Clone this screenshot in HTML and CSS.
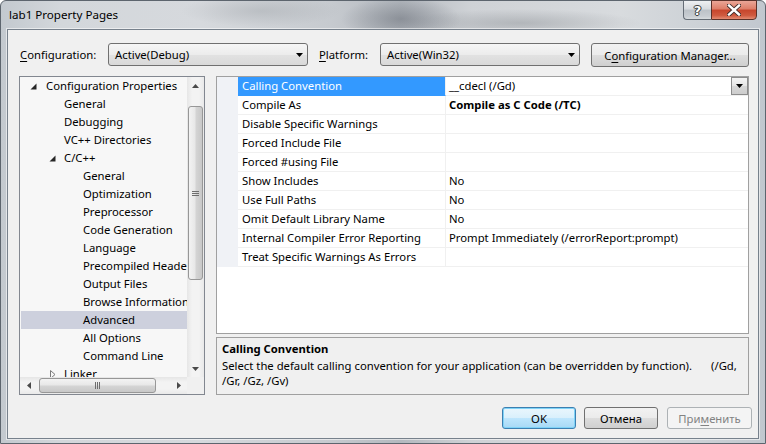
FILE: index.html
```html
<!DOCTYPE html>
<html>
<head>
<meta charset="utf-8">
<link rel="stylesheet" href="styles.css">
</head>
<body>
<div class="window">
  <div class="titlebar">
    <span class="title">lab1 Property Pages</span>
    <div class="caption">
      <div class="cbtn help"><span>?</span></div>
      <div class="cbtn close">
        <svg width="14" height="12" viewBox="0 0 14 12"><path d="M2 1.5L12 10.5M12 1.5L2 10.5" stroke="#3b2a28" stroke-width="4.2" stroke-linecap="square"/><path d="M2 1.5L12 10.5M12 1.5L2 10.5" stroke="#ffffff" stroke-width="2.4" stroke-linecap="square"/></svg>
      </div>
    </div>
  </div>
  <div class="client">
    <div class="toprow">
      <label class="lbl cfg-lbl"><u>C</u>onfiguration:</label>
      <div class="combo"><span>Active(Debug)</span><svg class="arr" width="7" height="4" viewBox="0 0 7 4"><path d="M0 0H7L3.5 4Z" fill="#000"/></svg></div>
      <label class="lbl plat-lbl"><u>P</u>latform:</label>
      <div class="combo"><span>Active(Win32)</span><svg class="arr" width="7" height="4" viewBox="0 0 7 4"><path d="M0 0H7L3.5 4Z" fill="#000"/></svg></div>
      <div class="btn cfgmgr">C<u>o</u>nfiguration Manager...</div>
    </div>
    <div class="main">
      <div class="tree">
        <div class="tree-top">
          <div class="list">
            <div class="item l1"><svg class="exp" width="7" height="7" viewBox="0 0 7 7"><path d="M6.5 0.5V6.5H0.5Z" fill="#262626"/></svg>Configuration Properties</div>
            <div class="item l2">General</div>
            <div class="item l2">Debugging</div>
            <div class="item l2">VC++ Directories</div>
            <div class="item l2"><svg class="exp" width="7" height="7" viewBox="0 0 7 7"><path d="M6.5 0.5V6.5H0.5Z" fill="#262626"/></svg>C/C++</div>
            <div class="item l3">General</div>
            <div class="item l3">Optimization</div>
            <div class="item l3">Preprocessor</div>
            <div class="item l3">Code Generation</div>
            <div class="item l3">Language</div>
            <div class="item l3">Precompiled Headers</div>
            <div class="item l3">Output Files</div>
            <div class="item l3">Browse Information</div>
            <div class="item l3 sel">Advanced</div>
            <div class="item l3">All Options</div>
            <div class="item l3">Command Line</div>
            <div class="item l2"><svg class="col" width="6" height="9" viewBox="0 0 6 9"><path d="M0.5 0.5L5 4.5L0.5 8.5Z" fill="none" stroke="#7a7a7a"/></svg>Linker</div>
          </div>
          <div class="vscroll">
            <div class="sarrow"><svg width="7" height="4" viewBox="0 0 7 4"><path d="M0 4L3.5 0L7 4Z" fill="#4a4a4a"/></svg></div>
            <div class="vtrack">
              <div class="vthumb"><svg width="7" height="7" viewBox="0 0 7 7"><path d="M0 1.5H7M0 3.5H7M0 5.5H7" stroke="#6e6e6e" stroke-width="1"/></svg></div>
            </div>
            <div class="sarrow"><svg width="7" height="4" viewBox="0 0 7 4"><path d="M0 0H7L3.5 4Z" fill="#4a4a4a"/></svg></div>
          </div>
        </div>
        <div class="tree-bottom">
          <div class="hscroll">
            <div class="harrow"><svg width="4" height="7" viewBox="0 0 4 7"><path d="M4 0V7L0 3.5Z" fill="#4a4a4a"/></svg></div>
            <div class="htrack">
              <div class="hthumb"><svg width="7" height="7" viewBox="0 0 7 7"><path d="M1.5 0V7M3.5 0V7M5.5 0V7" stroke="#6e6e6e" stroke-width="1"/></svg></div>
            </div>
            <div class="harrow"><svg width="4" height="7" viewBox="0 0 4 7"><path d="M0 0V7L4 3.5Z" fill="#4a4a4a"/></svg></div>
          </div>
          <div class="corner"></div>
        </div>
      </div>
      <div class="right">
        <div class="grid">
          <div class="row"><div class="gut"></div><div class="name hl">Calling Convention</div><div class="val">__cdecl (/Gd)<div class="ddbtn"><svg width="7" height="4" viewBox="0 0 7 4"><path d="M0 0H7L3.5 4Z" fill="#000"/></svg></div></div></div>
          <div class="row"><div class="gut"></div><div class="name">Compile As</div><div class="val bold">Compile as C Code (/TC)</div></div>
          <div class="row"><div class="gut"></div><div class="name">Disable Specific Warnings</div><div class="val"></div></div>
          <div class="row"><div class="gut"></div><div class="name">Forced Include File</div><div class="val"></div></div>
          <div class="row"><div class="gut"></div><div class="name">Forced #using File</div><div class="val"></div></div>
          <div class="row"><div class="gut"></div><div class="name">Show Includes</div><div class="val">No</div></div>
          <div class="row"><div class="gut"></div><div class="name">Use Full Paths</div><div class="val">No</div></div>
          <div class="row"><div class="gut"></div><div class="name">Omit Default Library Name</div><div class="val">No</div></div>
          <div class="row"><div class="gut"></div><div class="name">Internal Compiler Error Reporting</div><div class="val">Prompt Immediately (/errorReport:prompt)</div></div>
          <div class="row"><div class="gut"></div><div class="name">Treat Specific Warnings As Errors</div><div class="val"></div></div>
        </div>
        <div class="desc">
          <div class="desc-title">Calling Convention</div>
          <div class="desc-text">Select the default calling convention for your application (can be overridden by function).<span class="sp"></span>(/Gd,<br>/Gr, /Gz, /Gv)</div>
        </div>
      </div>
    </div>
    <div class="buttons">
      <div class="btn ok">OK</div>
      <div class="btn cancel">Отмена</div>
      <div class="btn apply">При<u>м</u>енить</div>
    </div>
  </div>
</div>
</body>
</html>
```
FILE: styles.css
```css
* { box-sizing: border-box; }
html, body { margin: 0; padding: 0; }
body {
  width: 766px;
  height: 444px;
  overflow: hidden;
  font-family: "Noto Sans", "Open Sans", sans-serif;
  font-size: 11.3px;
  color: #000;
}
.window {
  width: 766px;
  height: 444px;
  background:
    radial-gradient(ellipse 60px 22px at 400px 18px, rgba(90,95,105,0.45), rgba(90,95,105,0)),
    radial-gradient(ellipse 120px 14px at 520px 22px, rgba(120,125,130,0.35), rgba(120,125,130,0)),
    radial-gradient(ellipse 80px 16px at 260px 10px, rgba(150,155,160,0.35), rgba(150,155,160,0)),
    linear-gradient(90deg, #c3c9cf 0px, #d3d7db 60px, #d6d9dd 200px, #c6cacf 330px, #b4b9bf 400px, #cfd2d6 470px, #d8dbde 620px, #ccd1d6 700px, #c1c7ce 766px);
  border: 1px solid #5d656e;
  border-radius: 6px 6px 0 0;
  display: flex;
  flex-direction: column;
}
.titlebar {
  height: 28px;
  display: flex;
  align-items: flex-start;
  position: relative;
}
.title {
  margin-left: 8px;
  margin-top: 6px;
  font-size: 11.6px;
  color: #000;
}
.caption {
  position: absolute;
  top: -1px;
  left: 682px;
  display: flex;
}
.cbtn {
  height: 20px;
  display: flex;
  align-items: center;
  justify-content: center;
}
.help {
  width: 28px;
  background: linear-gradient(#eef0f2, #d7dbdf 45%, #bcc2c8 50%, #c8cdd2 85%, #d8dcdf);
  border: 1px solid #656d76;
  border-right: none;
  border-radius: 0 0 0 4px;
}
.help span {
  font-family: "DejaVu Sans", sans-serif;
  font-weight: bold;
  font-size: 13px;
  color: #fff;
  text-shadow: 0 0 1px #333, 0 0 1px #333, 1px 0 0 #444, -1px 0 0 #444, 0 1px 0 #444, 0 -1px 0 #444;
  line-height: 1;
}
.close {
  width: 46px;
  background: linear-gradient(#eaa697, #dd7d67 45%, #c7452c 50%, #cf5a3f 80%, #e48b72);
  border: 1px solid #5a3129;
  border-radius: 0 0 4px 0;
}
.client {
  margin-left: 6px;
  width: 752px;
  height: 410px;
  border: 1px solid #77818c;
  box-shadow: 0 0 0 1px rgba(255,255,255,0.55);
  background: #f0f0f0;
  display: flex;
  flex-direction: column;
}
.toprow {
  height: 46px;
  padding: 13px 0 0 12px;
  display: flex;
  align-items: flex-start;
}
.lbl {
  height: 23px;
  line-height: 23px;
}
.cfg-lbl { width: 88px; }
.plat-lbl { width: 61px; margin-left: 11px; }
.combo {
  width: 200px;
  height: 23px;
  border: 1px solid #707070;
  border-radius: 3px;
  background: linear-gradient(#f6f6f6, #ececec 50%, #e2e2e2 51%, #d9d9d9);
  display: flex;
  align-items: center;
  padding-left: 6px;
  position: relative;
}
.combo span { flex: 1; }
.combo .arr { margin-right: 4px; }
.btn {
  display: flex;
  align-items: center;
  justify-content: center;
  border: 1px solid #707070;
  border-radius: 3px;
  background: linear-gradient(#f2f2f2, #ebebeb 50%, #dddddd 51%, #cfcfcf);
}
.cfgmgr {
  width: 158px;
  height: 24px;
  margin-left: 11px;
}
.main {
  display: flex;
  padding-left: 11px;
  gap: 11px;
  height: 319px;
}
.tree {
  width: 186px;
  height: 319px;
  border: 1px solid #828790;
  background: #f7f7f7;
  display: flex;
  flex-direction: column;
}
.tree-top {
  display: flex;
  height: 300px;
}
.list {
  width: 167px;
  height: 300px;
  overflow: hidden;
  padding-left: 1px;
}
.item {
  height: 18px;
  line-height: 18px;
  white-space: nowrap;
  overflow: hidden;
  position: relative;
}
.item.l1 { padding-left: 25px; }
.item.l2 { padding-left: 43px; }
.item.l3 { padding-left: 62px; }
.item.sel { background: #cdd0dd; width: 166px; }
.item .exp {
  position: absolute;
  top: 6px;
}
.l1 .exp { left: 9px; }
.l2 .exp { left: 28px; }
.item .col {
  position: absolute;
  left: 29px;
  top: 5px;
}
.vscroll {
  width: 17px;
  height: 300px;
  background: linear-gradient(90deg, #e6e6e6, #f3f3f3 30%, #f3f3f3 70%, #e9e9e9);
  display: flex;
  flex-direction: column;
}
.sarrow {
  height: 17px;
  display: flex;
  align-items: center;
  justify-content: center;
}
.vtrack {
  flex: 1;
  padding-top: 12px;
  padding-left: 1px;
  padding-right: 1px;
}
.vthumb {
  height: 174px;
  border: 1px solid #979797;
  border-radius: 3px;
  background: linear-gradient(90deg, #f3f3f3, #e8e8e8 45%, #d4d4d4 55%, #c8c8c8);
  display: flex;
  align-items: center;
  justify-content: center;
}
.tree-bottom {
  display: flex;
  height: 17px;
}
.hscroll {
  width: 167px;
  height: 17px;
  background: linear-gradient(#e6e6e6, #f3f3f3 30%, #f3f3f3 70%, #e9e9e9);
  display: flex;
}
.harrow {
  width: 17px;
  display: flex;
  align-items: center;
  justify-content: center;
}
.htrack {
  flex: 1;
  padding: 1px 0 1px 2px;
}
.hthumb {
  width: 117px;
  height: 15px;
  border: 1px solid #979797;
  border-radius: 3px;
  background: linear-gradient(#f3f3f3, #e8e8e8 45%, #d4d4d4 55%, #c8c8c8);
  display: flex;
  align-items: center;
  justify-content: center;
}
.corner {
  width: 17px;
  background: #f0f0f0;
}
.right {
  width: 533px;
  display: flex;
  flex-direction: column;
  gap: 3px;
}
.grid {
  height: 258px;
  border: 1px solid #a0a0a0;
  background: #fff;
}
.row {
  display: flex;
  height: 19px;
}
.gut {
  width: 21px;
  background: #f0f2f6;
}
.name {
  width: 208px;
  padding-left: 4px;
  line-height: 18px;
  border-bottom: 1px solid #f0f0f0;
  border-right: 1px solid #f0f0f0;
  white-space: nowrap;
  overflow: hidden;
}
.name.hl {
  background: #3399ff;
  color: #fff;
  border-bottom-color: #3399ff;
}
.val {
  flex: 1;
  padding-left: 3px;
  line-height: 18px;
  border-bottom: 1px solid #f0f0f0;
  white-space: nowrap;
  position: relative;
}
.val.bold { font-weight: bold; }
.ddbtn {
  position: absolute;
  right: 0;
  top: 0;
  width: 17px;
  height: 18px;
  border: 1px solid #8c8c8c;
  background: linear-gradient(#f4f4f4, #e4e4e4 50%, #d6d6d6 51%, #cdcdcd);
  display: flex;
  align-items: center;
  justify-content: center;
}
.desc {
  height: 58px;
  border: 1px solid #a0a0a0;
  padding: 2px 5px 0 5px;
  line-height: 15px;
}
.desc-title {
  font-weight: bold;
  height: 17px;
  line-height: 17px;
}
.desc-text { margin-top: 1px; }
.sp { display: inline-block; width: 19px; }
.buttons {
  display: flex;
  justify-content: flex-end;
  padding-right: 6px;
  margin-top: 12px;
  gap: 8px;
}
.buttons .btn { height: 22px; }
.ok {
  width: 74px;
  border-color: #3c7fb1;
  background: linear-gradient(#eaf6fd, #d9f0fc 50%, #bee6fd 51%, #a7d9f5);
  box-shadow: inset 0 0 0 1px #7fd3f7;
}
.cancel { width: 74px; }
.apply {
  width: 85px;
  margin-left: 1px;
  border-color: #adb2b5;
  background: #f4f4f4;
  color: #838383;
}
u { text-decoration: underline; text-underline-offset: 2px; }
```
